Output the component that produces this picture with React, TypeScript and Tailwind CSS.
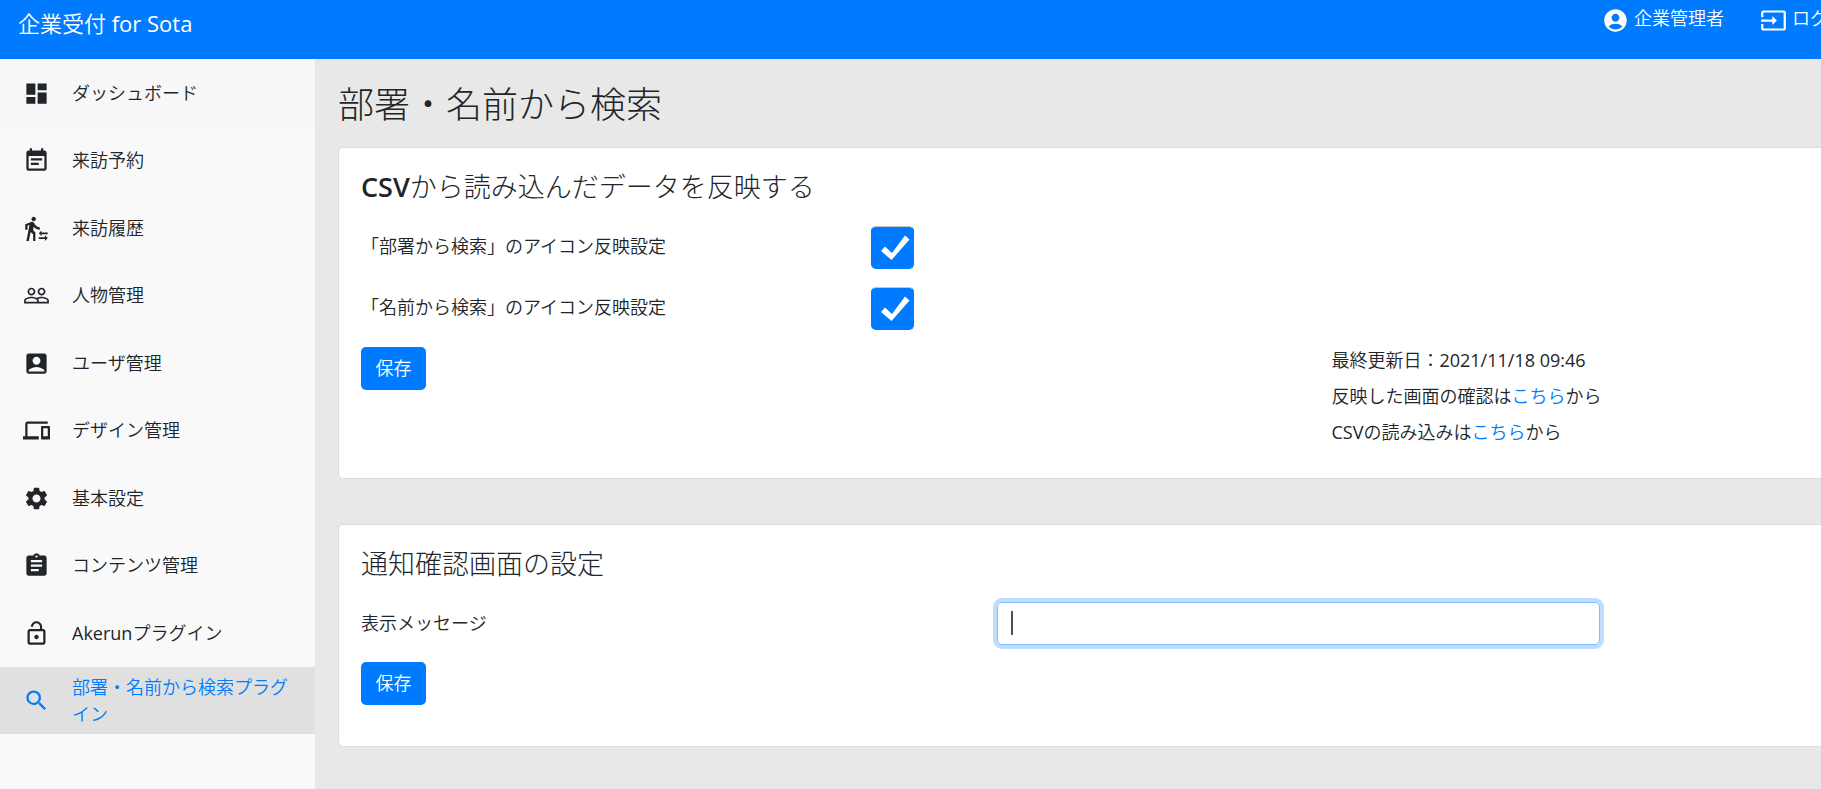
import { useState } from 'react'
import type { ReactNode } from 'react'
import clsx from 'clsx'
import type { IconType } from 'react-icons'
import {
  MdAccountBox,
  MdAccountCircle,
  MdAssignment,
  MdDashboard,
  MdDevices,
  MdEventNote,
  MdInput,
  MdLockOpen,
  MdPeopleOutline,
  MdSearch,
  MdSettings,
  MdTransferWithinAStation,
} from 'react-icons/md'

type NavItem = { id: string; label: ReactNode; icon: IconType }

// Latin runs need the regular weight beside the thin Japanese face
function Latin({ children }: { children: ReactNode }) {
  return <span className="font-normal">{children}</span>
}

const navItems: NavItem[] = [
  { id: 'dashboard', label: 'ダッシュボード', icon: MdDashboard },
  { id: 'reservations', label: '来訪予約', icon: MdEventNote },
  { id: 'history', label: '来訪履歴', icon: MdTransferWithinAStation },
  { id: 'people', label: '人物管理', icon: MdPeopleOutline },
  { id: 'users', label: 'ユーザ管理', icon: MdAccountBox },
  { id: 'design', label: 'デザイン管理', icon: MdDevices },
  { id: 'settings', label: '基本設定', icon: MdSettings },
  { id: 'contents', label: 'コンテンツ管理', icon: MdAssignment },
  { id: 'akerun', label: <><Latin>Akerun</Latin>プラグイン</>, icon: MdLockOpen },
  { id: 'search', label: '部署・名前から検索プラグイン', icon: MdSearch },
]

const activeId = 'search'

function Header() {
  return (
    <header className="flex h-[59px] items-start justify-between bg-[#007bff] px-[18px] text-white">
      <a href="#" className="pt-[7px] text-[22px] leading-8">企業受付 <Latin>for Sota</Latin></a>
      <nav aria-label="アカウント" className="flex gap-9 pt-[7px]">
        <a href="#account" className="flex gap-[5px]">
          <MdAccountCircle size={27} aria-hidden="true" />
          <span className="leading-[22px]">企業管理者</span>
        </a>
        <a href="#logout" className="flex gap-[5px]">
          <MdInput size={27} aria-hidden="true" />
          <span className="leading-[22px]">ログアウト</span>
        </a>
      </nav>
    </header>
  )
}

function Sidebar() {
  return (
    <aside className="w-[315px] shrink-0 bg-[#f9f9f9]">
      <ul className="grid h-[675px] auto-rows-fr">
        {navItems.map(({ id, label, icon: Icon }) => (
          <li key={id} className="first:bg-[#f7f7f7]">
            <a
              href={`#${id}`}
              aria-current={id === activeId ? 'page' : undefined}
              className={clsx(
                'flex h-full items-center gap-[22px] px-[23px] pt-px',
                id === activeId && 'bg-[#e0e0e0] text-[#007bff]'
              )}
            >
              <Icon size={27} className="shrink-0" aria-hidden="true" />
              <span>{label}</span>
            </a>
          </li>
        ))}
      </ul>
    </aside>
  )
}

function SaveButton() {
  return (
    <button type="submit" className="h-[43px] w-[65px] rounded-[5px] bg-[#007bff] text-white">
      保存
    </button>
  )
}

type CheckRowProps = { id: string; label: string; checked: boolean; onChange: (v: boolean) => void }

function CheckRow({ id, label, checked, onChange }: CheckRowProps) {
  return (
    <div className="-mx-[17px] mb-[17px] grid grid-cols-12 items-start">
      <label htmlFor={id} className="col-span-4 px-[17px] pt-2">{label}</label>
      <div className="col-span-8 px-[18px] pt-px">
        <div className="relative size-[43px]">
          <input
            id={id}
            type="checkbox"
            checked={checked}
            onChange={e => onChange(e.target.checked)}
            className="block size-[43px] appearance-none rounded-[5px] border border-[#adb5bd] bg-white checked:border-[#007bff] checked:border-t-[#c4c8cc] checked:bg-[#007bff]"
          />
          {checked && (
            <svg viewBox="0 0 43 43" className="pointer-events-none absolute inset-0" aria-hidden="true">
              <path d="M10 25l4-4.500 7 6.500L34 9.500l4.500 4L20.500 34z" fill="#fff" />
            </svg>
          )}
        </div>
      </div>
    </div>
  )
}

export default function App() {
  const [byDepartment, setByDepartment] = useState(true)
  const [byName, setByName] = useState(true)
  const [message, setMessage] = useState('')

  return (
    <div
      className="min-h-screen overflow-hidden font-['Open_Sans','Noto_Sans_CJK_JP',sans-serif] text-[18px] leading-[27px] font-[350] text-[#212529]"
      lang="ja"
    >
      <div className="flex min-h-screen min-w-[1900px] flex-col">
        <Header />
        <div className="flex flex-1">
          <Sidebar />
          <main className="flex-1 bg-[#e8e8e8] px-[23px] pt-6">
            <h1 className="mb-5 text-[36px] leading-[44px] font-light">部署・名前から検索</h1>

            <form
              onSubmit={e => e.preventDefault()}
              className="mb-[45px] rounded-[5px] border border-[#dcdcdc] bg-white px-[22px] py-[23px]"
            >
              <h2 className="mb-[22px] text-[27px] leading-8 font-light">
                <span className="font-semibold">CSV</span>から読み込んだデータを反映する
              </h2>
              <CheckRow
                id="by-department"
                label="「部署から検索」のアイコン反映設定"
                checked={byDepartment}
                onChange={setByDepartment}
              />
              <CheckRow
                id="by-name"
                label="「名前から検索」のアイコン反映設定"
                checked={byName}
                onChange={setByName}
              />
              <div className="flex items-start justify-between">
                <SaveButton />
                <div className="w-[35%]">
                  <p className="mb-[9px]">最終更新日：<Latin>2021/11/18 09:46</Latin></p>
                  <p className="mb-[9px]">
                    反映した画面の確認は<a href="#preview" className="text-[#007bff]">こちら</a>から
                  </p>
                  <p className="mb-[9px]">
                    <Latin>CSV</Latin>の読み込みは<a href="#import" className="text-[#007bff]">こちら</a>から
                  </p>
                </div>
              </div>
            </form>

            <form
              onSubmit={e => e.preventDefault()}
              className="mb-[43px] rounded-[5px] border border-[#dcdcdc] bg-white px-[22px] pt-[23px] pb-[41px]"
            >
              <h2 className="mb-[22px] text-[27px] leading-8 font-light">通知確認画面の設定</h2>
              <div className="-mx-[17px] mb-[17px] grid grid-cols-12 items-center">
                <label htmlFor="message" className="col-span-5 px-[17px]">表示メッセージ</label>
                <div className="col-span-5 px-[17px]">
                  <div className="relative">
                    <input
                      id="message"
                      type="text"
                      autoFocus
                      value={message}
                      onChange={e => setMessage(e.target.value)}
                      className="block h-[43px] w-full rounded-[5px] border border-[#80bdff] px-[14px] text-[#495057] caret-transparent shadow-[0_0_0_4px_rgba(0,123,255,0.25)] outline-none"
                    />
                    {message === '' && (
                      <span className="pointer-events-none absolute top-[9px] left-[14px] h-6 w-0.5 bg-[#495057]" />
                    )}
                  </div>
                </div>
              </div>
              <SaveButton />
            </form>
          </main>
        </div>
      </div>
    </div>
  )
}
